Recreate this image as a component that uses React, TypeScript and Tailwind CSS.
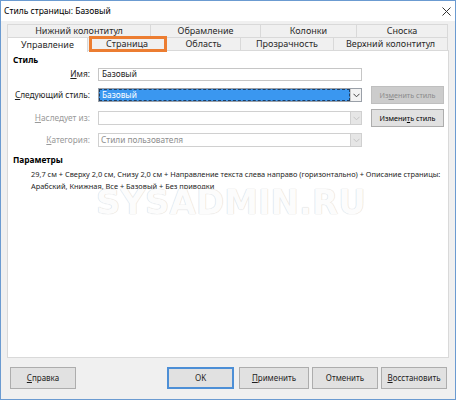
import React from 'react';

const Chevron = ({ muted }: { muted?: boolean }) => (
  <svg width="7" height="5" viewBox="0 0 7 5" fill="none">
    <path d="M0.5 0.8 L3.5 3.8 L6.5 0.8" stroke={muted ? '#c4c4c4' : '#444'} strokeWidth="1" />
  </svg>
);

const Row1Tab = ({ label, w, last }: { label: string; w: string; last?: boolean }) => (
  <div className={`${w} h-full flex items-center justify-center border-t border-l border-[#d9d9d9] ${last ? 'border-r' : ''}`}>
    {label}
  </div>
);

const btn = 'h-[22px] bg-[#e1e1e1] border border-[#adadad] flex items-center justify-center text-[8px]';

const App: React.FC = () => {
  return (
    <div
      className="w-[456px] h-[400px] bg-[#f0f0f0] border border-[#6b9bd1] flex flex-col text-[9px] text-[#1e1e1e] overflow-hidden relative"
      style={{ fontFamily: '"Noto Sans", "Open Sans", sans-serif' }}
    >
      {/* Title bar */}
      <div className="h-[20px] bg-white flex items-center justify-between pl-[3px] pr-[3px] shrink-0">
        <span className="text-[8.5px] text-black">Стиль страницы: Базовый</span>
        <svg width="9" height="9" viewBox="0 0 9 9" className="mr-[1px]">
          <path d="M0.5 0.5 L8.5 8.5 M8.5 0.5 L0.5 8.5" stroke="#333" strokeWidth="1" />
        </svg>
      </div>

      {/* Tabs */}
      <div className="px-[6px] pt-[3px] shrink-0">
        <div className="h-[13px] flex text-[#2a2a2a]">
          <Row1Tab label="Нижний колонтитул" w="w-[143px]" />
          <Row1Tab label="Обрамление" w="w-[110px]" />
          <Row1Tab label="Колонки" w="w-[96px]" />
          <Row1Tab label="Сноска" w="w-[92px]" last />
        </div>
        <div className="h-[14px] flex text-[#2a2a2a] border-b border-[#d9d9d9]">
          <div className="w-[81px] h-[15px] flex items-center justify-center bg-white border-t border-l border-r border-[#d9d9d9] -mb-px z-10">
            Управление
          </div>
          <div className="w-[78px] h-full flex items-center justify-center border-t border-[#d9d9d9] relative">
            Страница
            <div className="absolute left-[1px] right-[-1px] top-[-2px] bottom-[-2px] border-[3px] border-[#ec7d31]" />
          </div>
          <div className="w-[74px] h-full flex items-center justify-center border-t border-l border-[#d9d9d9]">Область</div>
          <div className="w-[93px] h-full flex items-center justify-center border-t border-l border-[#d9d9d9]">Прозрачность</div>
          <div className="w-[115px] h-full flex items-center justify-center border-t border-l border-r border-[#d9d9d9]">Верхний колонтитул</div>
        </div>
      </div>

      {/* Content panel */}
      <div className="mx-[6px] h-[307px] bg-white border-l border-r border-b border-[#d9d9d9] shrink-0 pl-[5px] pt-[3px] flex flex-col text-[8.3px]">
        <div className="h-[12px] flex items-center font-bold text-black">Стиль</div>

        <div className="flex flex-col gap-[5px] mt-[2px]">
          <div className="h-[13px] flex items-center">
            <div className="w-[77px] text-right whitespace-nowrap"><u>И</u>мя:</div>
            <div className="ml-[8px] w-[264px] h-[13px] border border-[#c6c6c6] flex items-center pl-[3px]">Базовый</div>
          </div>

          <div className="h-[18px] flex items-center">
            <div className="w-[77px] text-right whitespace-nowrap"><u>С</u>ледующий стиль:</div>
            <div className="ml-[8px] w-[264px] h-[14px] border border-[#9aa0a8] flex">
              <div className="flex-1 bg-[#3a97f0] border border-dashed border-[#1d3f66] flex items-center pl-[2px] text-white">Базовый</div>
              <div className="w-[11px] bg-[#f3f3f3] border-l border-[#c6c6c6] flex items-center justify-center">
                <Chevron />
              </div>
            </div>
            <div className="ml-[9px] w-[73px] h-[18px] bg-[#cccccc] border border-[#bfbfbf] flex items-center justify-center text-[#8b8b8b] text-[7.2px] whitespace-nowrap">
              Из<u>м</u>енить стиль
            </div>
          </div>

          <div className="h-[18px] flex items-center">
            <div className="w-[77px] text-right text-[#9a9a9a] whitespace-nowrap"><u>Н</u>аследует из:</div>
            <div className="ml-[8px] w-[264px] h-[14px] border border-[#d0d0d0] flex">
              <div className="flex-1" />
              <div className="w-[11px] bg-[#e6e6e6] border-l border-[#d0d0d0] flex items-center justify-center">
                <Chevron muted />
              </div>
            </div>
            <div className="ml-[9px] w-[73px] h-[18px] bg-[#e1e1e1] border border-[#adadad] flex items-center justify-center text-black text-[7.2px] whitespace-nowrap">
              Измени<u>т</u>ь стиль
            </div>
          </div>

          <div className="h-[14px] flex items-center mt-[1px]">
            <div className="w-[77px] text-right text-[#9a9a9a] whitespace-nowrap"><u>К</u>атегория:</div>
            <div className="ml-[8px] w-[264px] h-[14px] border border-[#d0d0d0] flex">
              <div className="flex-1 flex items-center pl-[2px] text-[#8e8e8e]">Стили пользователя</div>
              <div className="w-[11px] bg-[#e6e6e6] border-l border-[#d0d0d0] flex items-center justify-center">
                <Chevron muted />
              </div>
            </div>
          </div>
        </div>

        <div className="h-[12px] mt-[7px] flex items-center font-bold text-black">Параметры</div>
        <div className="pl-[18px] mt-[2px] leading-[12px] text-[7.4px] text-[#1e1e1e] whitespace-nowrap">
          <div>29,7 см + Сверху 2,0 см, Снизу 2,0 см + Направление текста слева направо (горизонтально) + Описание страницы:</div>
          <div>Арабский, Книжная, Все + Базовый + Без приводки</div>
        </div>
      </div>

      {/* Watermark */}
      <div
        className="absolute left-[95px] top-[181px] text-[34px] leading-[40px] font-bold text-[#fcfcfc] [text-shadow:0_0_1px_#d6d6d6,0_0_1px_#d6d6d6] select-none pointer-events-none whitespace-nowrap"
        style={{ fontFamily: '"DejaVu Sans", sans-serif' }}
      >
        SYSADMIN.RU
      </div>

      {/* Buttons */}
      <div className="mt-[9px] h-[22px] flex items-center justify-between pl-[9px] pr-[8px] shrink-0">
        <div className={`w-[66px] ${btn}`}><u>С</u>правка</div>
        <div className="flex items-center">
          <div className="w-[67px] h-[22px] bg-[#e1e1e1] border-2 border-[#4d8fd6] flex items-center justify-center text-[8px]">OK</div>
          <div className={`ml-[5px] w-[70px] ${btn}`}><u>П</u>рименить</div>
          <div className={`ml-[3px] w-[66px] ${btn}`}>Отменить</div>
          <div className={`ml-[3px] w-[66px] ${btn}`}><u>В</u>осстановить</div>
        </div>
      </div>
    </div>
  );
};

export default App;
